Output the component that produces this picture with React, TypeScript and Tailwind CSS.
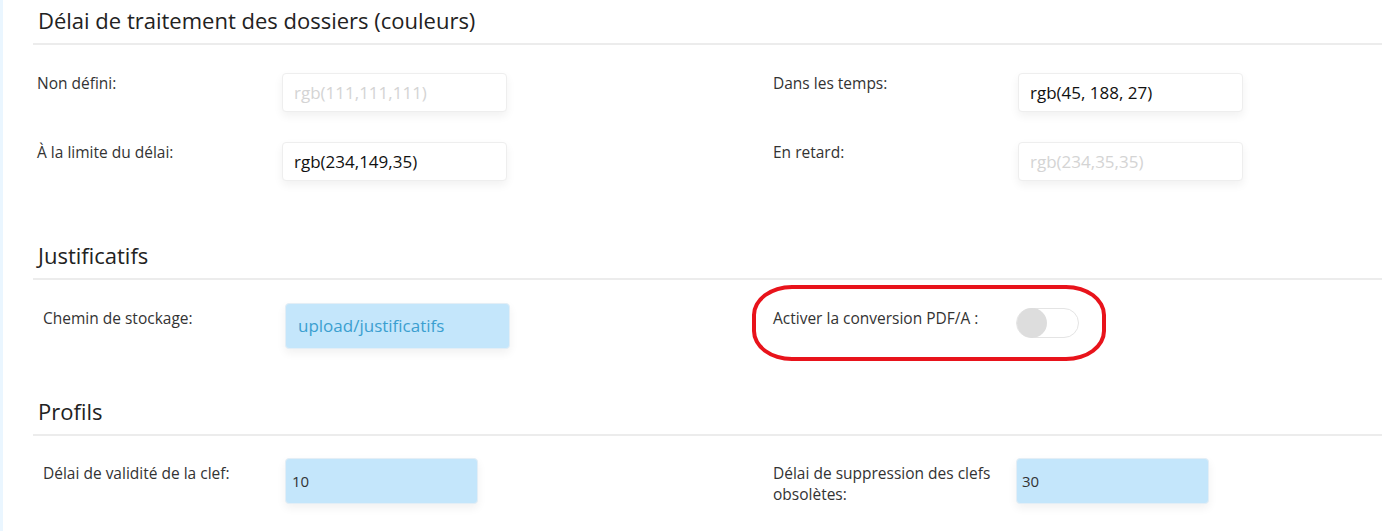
import React from "react";

const font = { fontFamily: '"Open Sans", "Liberation Sans", sans-serif' };

function Heading({ title }: { title: string }) {
  return (
    <div className="border-b-2 border-[#ececec] px-[5px] pb-[9px] pt-[6px]">
      <h2 className="text-[22px] leading-[28px] text-[#222]">{title}</h2>
    </div>
  );
}

function ColorInput({ value, placeholder }: { value?: string; placeholder?: string }) {
  return (
    <input
      readOnly
      value={value ?? ""}
      placeholder={placeholder}
      className="h-[39px] w-[225px] rounded-[4px] border border-[#eeeeee] bg-white px-[11px] text-[17px] text-[#111] shadow-[0_4px_10px_rgba(0,0,0,0.06)] outline-none placeholder:text-[#d4d4d4]"
      style={font}
    />
  );
}

function BlueInput({ value, width, className }: { value: string; width: string; className?: string }) {
  return (
    <div
      className={`flex h-[46px] ${width} items-center rounded-[4px] border border-[#e3eef6] bg-[#c4e6fb] shadow-[0_4px_10px_rgba(0,0,0,0.06)] ${className ?? ""}`}
    >
      {value}
    </div>
  );
}

export default function App() {
  return (
    <div className="relative h-[531px] w-full overflow-hidden border-l-[3px] border-[#eaf6ff] bg-white" style={font}>
      <div className="pl-[30px]">
        {/* Délai de traitement */}
        <Heading title="Délai de traitement des dossiers (couleurs)" />
        <div className="flex flex-col gap-[30px] pt-[28px] text-[15.5px] text-[#333]">
          <div className="flex">
            <div className="flex w-[740px] items-start pl-[4px]">
              <span className="w-[245px] leading-[20px]">Non défini:</span>
              <ColorInput placeholder="rgb(111,111,111)" />
            </div>
            <div className="flex items-start">
              <span className="w-[245px] leading-[20px]">Dans les temps:</span>
              <ColorInput value="rgb(45, 188, 27)" />
            </div>
          </div>
          <div className="flex">
            <div className="flex w-[740px] items-start pl-[4px]">
              <span className="w-[245px] leading-[20px]">À la limite du délai:</span>
              <ColorInput value="rgb(234,149,35)" />
            </div>
            <div className="flex items-start">
              <span className="w-[245px] leading-[20px]">En retard:</span>
              <ColorInput placeholder="rgb(234,35,35)" />
            </div>
          </div>
        </div>

        {/* Justificatifs */}
        <div className="mt-[54px]">
          <Heading title="Justificatifs" />
        </div>
        <div className="flex pt-[23px] text-[15.5px] text-[#333]">
          <div className="flex w-[740px] items-start pl-[10px]">
            <span className="w-[242px] pt-[5px] leading-[20px]">Chemin de stockage:</span>
            <BlueInput value="upload/justificatifs" width="w-[225px]" className="px-[12px] text-[17px] text-[#3b9fd0]" />
          </div>
          <div className="flex items-start">
            <span className="w-[243px] pt-[5px] leading-[20px]">Activer la conversion PDF/A :</span>
            <div className="mt-[5px] flex h-[30px] w-[63px] items-center rounded-full border border-[#e4e4e4] bg-white">
              <div className="h-[30px] w-[30px] rounded-full bg-[#dddddd]" />
            </div>
          </div>
        </div>

        {/* Profils */}
        <div className="mt-[42px]">
          <Heading title="Profils" />
        </div>
        <div className="flex pt-[22px] text-[15.5px] text-[#333]">
          <div className="flex w-[740px] items-start pl-[10px]">
            <span className="w-[242px] pt-[5px] leading-[21px]">Délai de validité de la clef:</span>
            <BlueInput value="10" width="w-[193px]" className="px-[6px] text-[15px] text-[#333]" />
          </div>
          <div className="flex items-start">
            <span className="w-[243px] pr-[14px] pt-[5px] leading-[21px]">Délai de suppression des clefs obsolètes:</span>
            <BlueInput value="30" width="w-[193px]" className="px-[5px] text-[15px] text-[#333]" />
          </div>
        </div>
      </div>

      {/* annotation */}
      <div className="pointer-events-none absolute left-[749px] top-[285px] h-[76px] w-[354px] rounded-[40px/30px] border-[4px] border-[#e8131b]" />
    </div>
  );
}
